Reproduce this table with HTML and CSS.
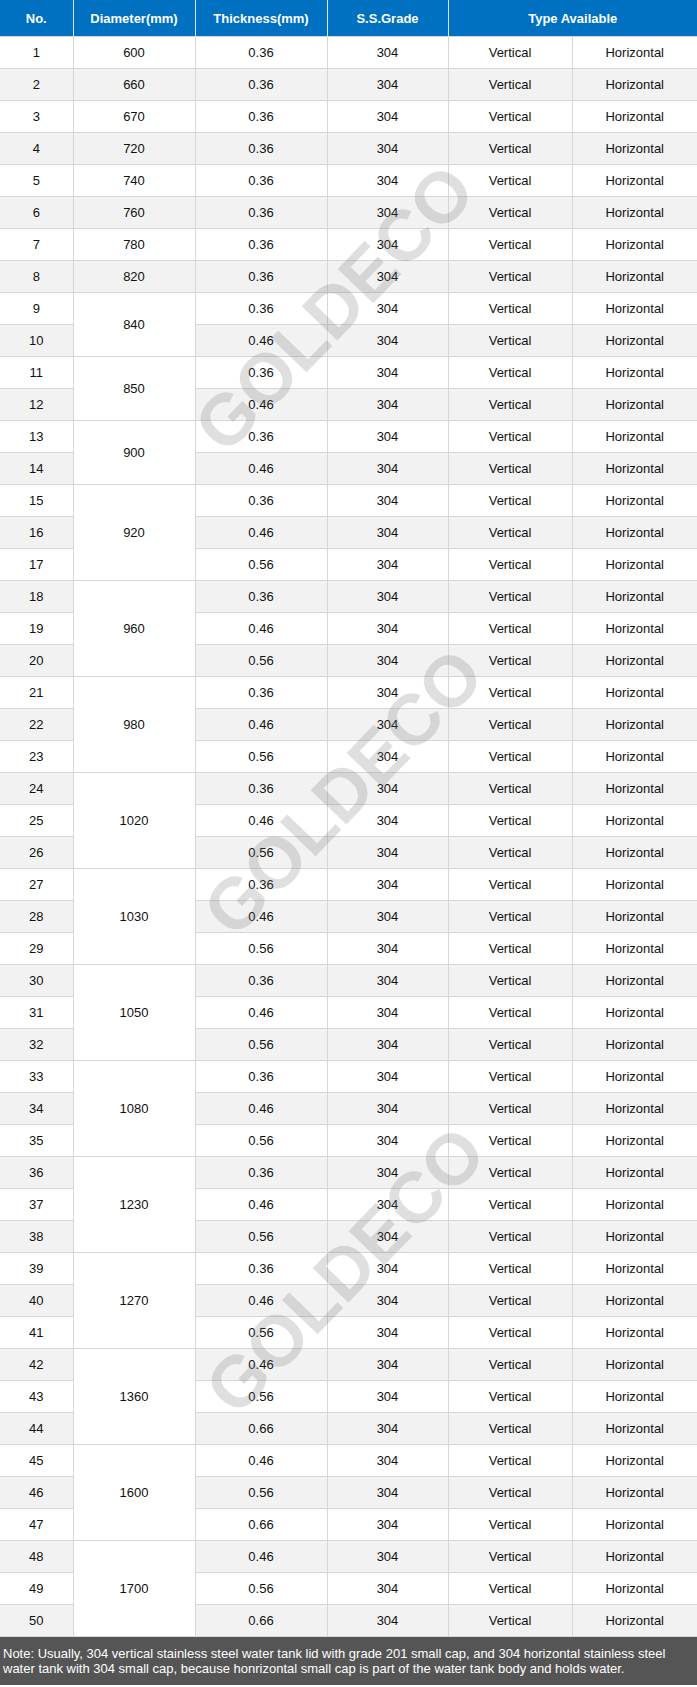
FILE: index.html
```html
<!DOCTYPE html>
<html>
<head>
<meta charset="utf-8">
<title>Stainless Steel Water Tank Specifications</title>
<link rel="stylesheet" href="styles.css">
</head>
<body>
<div class="sheet">
  <table class="spec">
    <colgroup>
      <col class="c-no"><col class="c-dia"><col class="c-thk"><col class="c-grade"><col class="c-v"><col class="c-h">
    </colgroup>
    <thead>
      <tr><th>No.</th><th>Diameter(mm)</th><th>Thickness(mm)</th><th>S.S.Grade</th><th colspan="2">Type Available</th></tr>
    </thead>
    <tbody>
      <tr><td>1</td><td>600</td><td>0.36</td><td>304</td><td>Vertical</td><td>Horizontal</td></tr>
      <tr class="alt"><td>2</td><td>660</td><td>0.36</td><td>304</td><td>Vertical</td><td>Horizontal</td></tr>
      <tr><td>3</td><td>670</td><td>0.36</td><td>304</td><td>Vertical</td><td>Horizontal</td></tr>
      <tr class="alt"><td>4</td><td>720</td><td>0.36</td><td>304</td><td>Vertical</td><td>Horizontal</td></tr>
      <tr><td>5</td><td>740</td><td>0.36</td><td>304</td><td>Vertical</td><td>Horizontal</td></tr>
      <tr class="alt"><td>6</td><td>760</td><td>0.36</td><td>304</td><td>Vertical</td><td>Horizontal</td></tr>
      <tr><td>7</td><td>780</td><td>0.36</td><td>304</td><td>Vertical</td><td>Horizontal</td></tr>
      <tr class="alt"><td>8</td><td>820</td><td>0.36</td><td>304</td><td>Vertical</td><td>Horizontal</td></tr>
      <tr><td>9</td><td class="merge" rowspan="2">840</td><td>0.36</td><td>304</td><td>Vertical</td><td>Horizontal</td></tr>
      <tr class="alt"><td>10</td><td>0.46</td><td>304</td><td>Vertical</td><td>Horizontal</td></tr>
      <tr><td>11</td><td class="merge" rowspan="2">850</td><td>0.36</td><td>304</td><td>Vertical</td><td>Horizontal</td></tr>
      <tr class="alt"><td>12</td><td>0.46</td><td>304</td><td>Vertical</td><td>Horizontal</td></tr>
      <tr><td>13</td><td class="merge" rowspan="2">900</td><td>0.36</td><td>304</td><td>Vertical</td><td>Horizontal</td></tr>
      <tr class="alt"><td>14</td><td>0.46</td><td>304</td><td>Vertical</td><td>Horizontal</td></tr>
      <tr><td>15</td><td class="merge" rowspan="3">920</td><td>0.36</td><td>304</td><td>Vertical</td><td>Horizontal</td></tr>
      <tr class="alt"><td>16</td><td>0.46</td><td>304</td><td>Vertical</td><td>Horizontal</td></tr>
      <tr><td>17</td><td>0.56</td><td>304</td><td>Vertical</td><td>Horizontal</td></tr>
      <tr class="alt"><td>18</td><td class="merge" rowspan="3">960</td><td>0.36</td><td>304</td><td>Vertical</td><td>Horizontal</td></tr>
      <tr><td>19</td><td>0.46</td><td>304</td><td>Vertical</td><td>Horizontal</td></tr>
      <tr class="alt"><td>20</td><td>0.56</td><td>304</td><td>Vertical</td><td>Horizontal</td></tr>
      <tr><td>21</td><td class="merge" rowspan="3">980</td><td>0.36</td><td>304</td><td>Vertical</td><td>Horizontal</td></tr>
      <tr class="alt"><td>22</td><td>0.46</td><td>304</td><td>Vertical</td><td>Horizontal</td></tr>
      <tr><td>23</td><td>0.56</td><td>304</td><td>Vertical</td><td>Horizontal</td></tr>
      <tr class="alt"><td>24</td><td class="merge" rowspan="3">1020</td><td>0.36</td><td>304</td><td>Vertical</td><td>Horizontal</td></tr>
      <tr><td>25</td><td>0.46</td><td>304</td><td>Vertical</td><td>Horizontal</td></tr>
      <tr class="alt"><td>26</td><td>0.56</td><td>304</td><td>Vertical</td><td>Horizontal</td></tr>
      <tr><td>27</td><td class="merge" rowspan="3">1030</td><td>0.36</td><td>304</td><td>Vertical</td><td>Horizontal</td></tr>
      <tr class="alt"><td>28</td><td>0.46</td><td>304</td><td>Vertical</td><td>Horizontal</td></tr>
      <tr><td>29</td><td>0.56</td><td>304</td><td>Vertical</td><td>Horizontal</td></tr>
      <tr class="alt"><td>30</td><td class="merge" rowspan="3">1050</td><td>0.36</td><td>304</td><td>Vertical</td><td>Horizontal</td></tr>
      <tr><td>31</td><td>0.46</td><td>304</td><td>Vertical</td><td>Horizontal</td></tr>
      <tr class="alt"><td>32</td><td>0.56</td><td>304</td><td>Vertical</td><td>Horizontal</td></tr>
      <tr><td>33</td><td class="merge" rowspan="3">1080</td><td>0.36</td><td>304</td><td>Vertical</td><td>Horizontal</td></tr>
      <tr class="alt"><td>34</td><td>0.46</td><td>304</td><td>Vertical</td><td>Horizontal</td></tr>
      <tr><td>35</td><td>0.56</td><td>304</td><td>Vertical</td><td>Horizontal</td></tr>
      <tr class="alt"><td>36</td><td class="merge" rowspan="3">1230</td><td>0.36</td><td>304</td><td>Vertical</td><td>Horizontal</td></tr>
      <tr><td>37</td><td>0.46</td><td>304</td><td>Vertical</td><td>Horizontal</td></tr>
      <tr class="alt"><td>38</td><td>0.56</td><td>304</td><td>Vertical</td><td>Horizontal</td></tr>
      <tr><td>39</td><td class="merge" rowspan="3">1270</td><td>0.36</td><td>304</td><td>Vertical</td><td>Horizontal</td></tr>
      <tr class="alt"><td>40</td><td>0.46</td><td>304</td><td>Vertical</td><td>Horizontal</td></tr>
      <tr><td>41</td><td>0.56</td><td>304</td><td>Vertical</td><td>Horizontal</td></tr>
      <tr class="alt"><td>42</td><td class="merge" rowspan="3">1360</td><td>0.46</td><td>304</td><td>Vertical</td><td>Horizontal</td></tr>
      <tr><td>43</td><td>0.56</td><td>304</td><td>Vertical</td><td>Horizontal</td></tr>
      <tr class="alt"><td>44</td><td>0.66</td><td>304</td><td>Vertical</td><td>Horizontal</td></tr>
      <tr><td>45</td><td class="merge" rowspan="3">1600</td><td>0.46</td><td>304</td><td>Vertical</td><td>Horizontal</td></tr>
      <tr class="alt"><td>46</td><td>0.56</td><td>304</td><td>Vertical</td><td>Horizontal</td></tr>
      <tr><td>47</td><td>0.66</td><td>304</td><td>Vertical</td><td>Horizontal</td></tr>
      <tr class="alt"><td>48</td><td class="merge" rowspan="3">1700</td><td>0.46</td><td>304</td><td>Vertical</td><td>Horizontal</td></tr>
      <tr><td>49</td><td>0.56</td><td>304</td><td>Vertical</td><td>Horizontal</td></tr>
      <tr class="alt"><td>50</td><td>0.66</td><td>304</td><td>Vertical</td><td>Horizontal</td></tr>
    </tbody>
  </table>
  <p class="note">Note: Usually, 304 vertical stainless steel water tank lid with grade 201 small cap, and 304 horizontal stainless steel water tank with 304 small cap, because honrizontal small cap is part of the water tank body and holds water.</p>
  <span class="watermark wm-1">GOLDECO</span>
  <span class="watermark wm-2">GOLDECO</span>
  <span class="watermark wm-3">GOLDECO</span>
</div>
</body>
</html>
```
FILE: styles.css
```css
html, body {
  margin: 0;
  padding: 0;
  background: #ffffff;
}

.sheet {
  position: relative;
  width: 697px;
  overflow: hidden;
  font-family: "Liberation Sans", Arial, sans-serif;
  font-size: 13px;
  color: #111111;
}

.spec {
  width: 697px;
  border-collapse: collapse;
  table-layout: fixed;
}

.c-no { width: 73px; }
.c-dia { width: 122px; }
.c-thk { width: 132px; }
.c-grade { width: 121px; }
.c-v { width: 124px; }
.c-h { width: 125px; }

.spec th {
  height: 36px;
  padding: 0;
  background: #0070c0;
  color: #ffffff;
  font-weight: bold;
  font-size: 13px;
  text-align: center;
  border-left: 1px solid #d8e6f2;
  border-right: 1px solid #d8e6f2;
}

.spec th:first-child { border-left: none; }
.spec th:last-child { border-right: none; }

.spec td {
  height: 31px;
  padding: 0;
  text-align: center;
  background: #ffffff;
  border: 1px solid #d6d6d6;
}

.spec td:first-child { border-left: none; }
.spec td:last-child { border-right: none; }

.spec tr.alt td {
  background: #f2f2f2;
}

.spec tr.alt td.merge,
.spec td.merge {
  background: #ffffff;
}

.note {
  margin: 0;
  padding: 9px 4px 9px 3px;
  background: #555555;
  color: #ffffff;
  font-size: 13px;
  line-height: 15px;
}

.watermark {
  position: absolute;
  font-family: "Liberation Sans", Arial, sans-serif;
  font-weight: bold;
  font-size: 72px;
  line-height: 1;
  color: rgba(110, 110, 110, 0.22);
  transform: translate(-50%, -50%) rotate(-46deg);
  white-space: nowrap;
  pointer-events: none;
}

.wm-1 { left: 334px; top: 308px; }
.wm-2 { left: 343px; top: 792px; }
.wm-3 { left: 345px; top: 1270px; }
```
